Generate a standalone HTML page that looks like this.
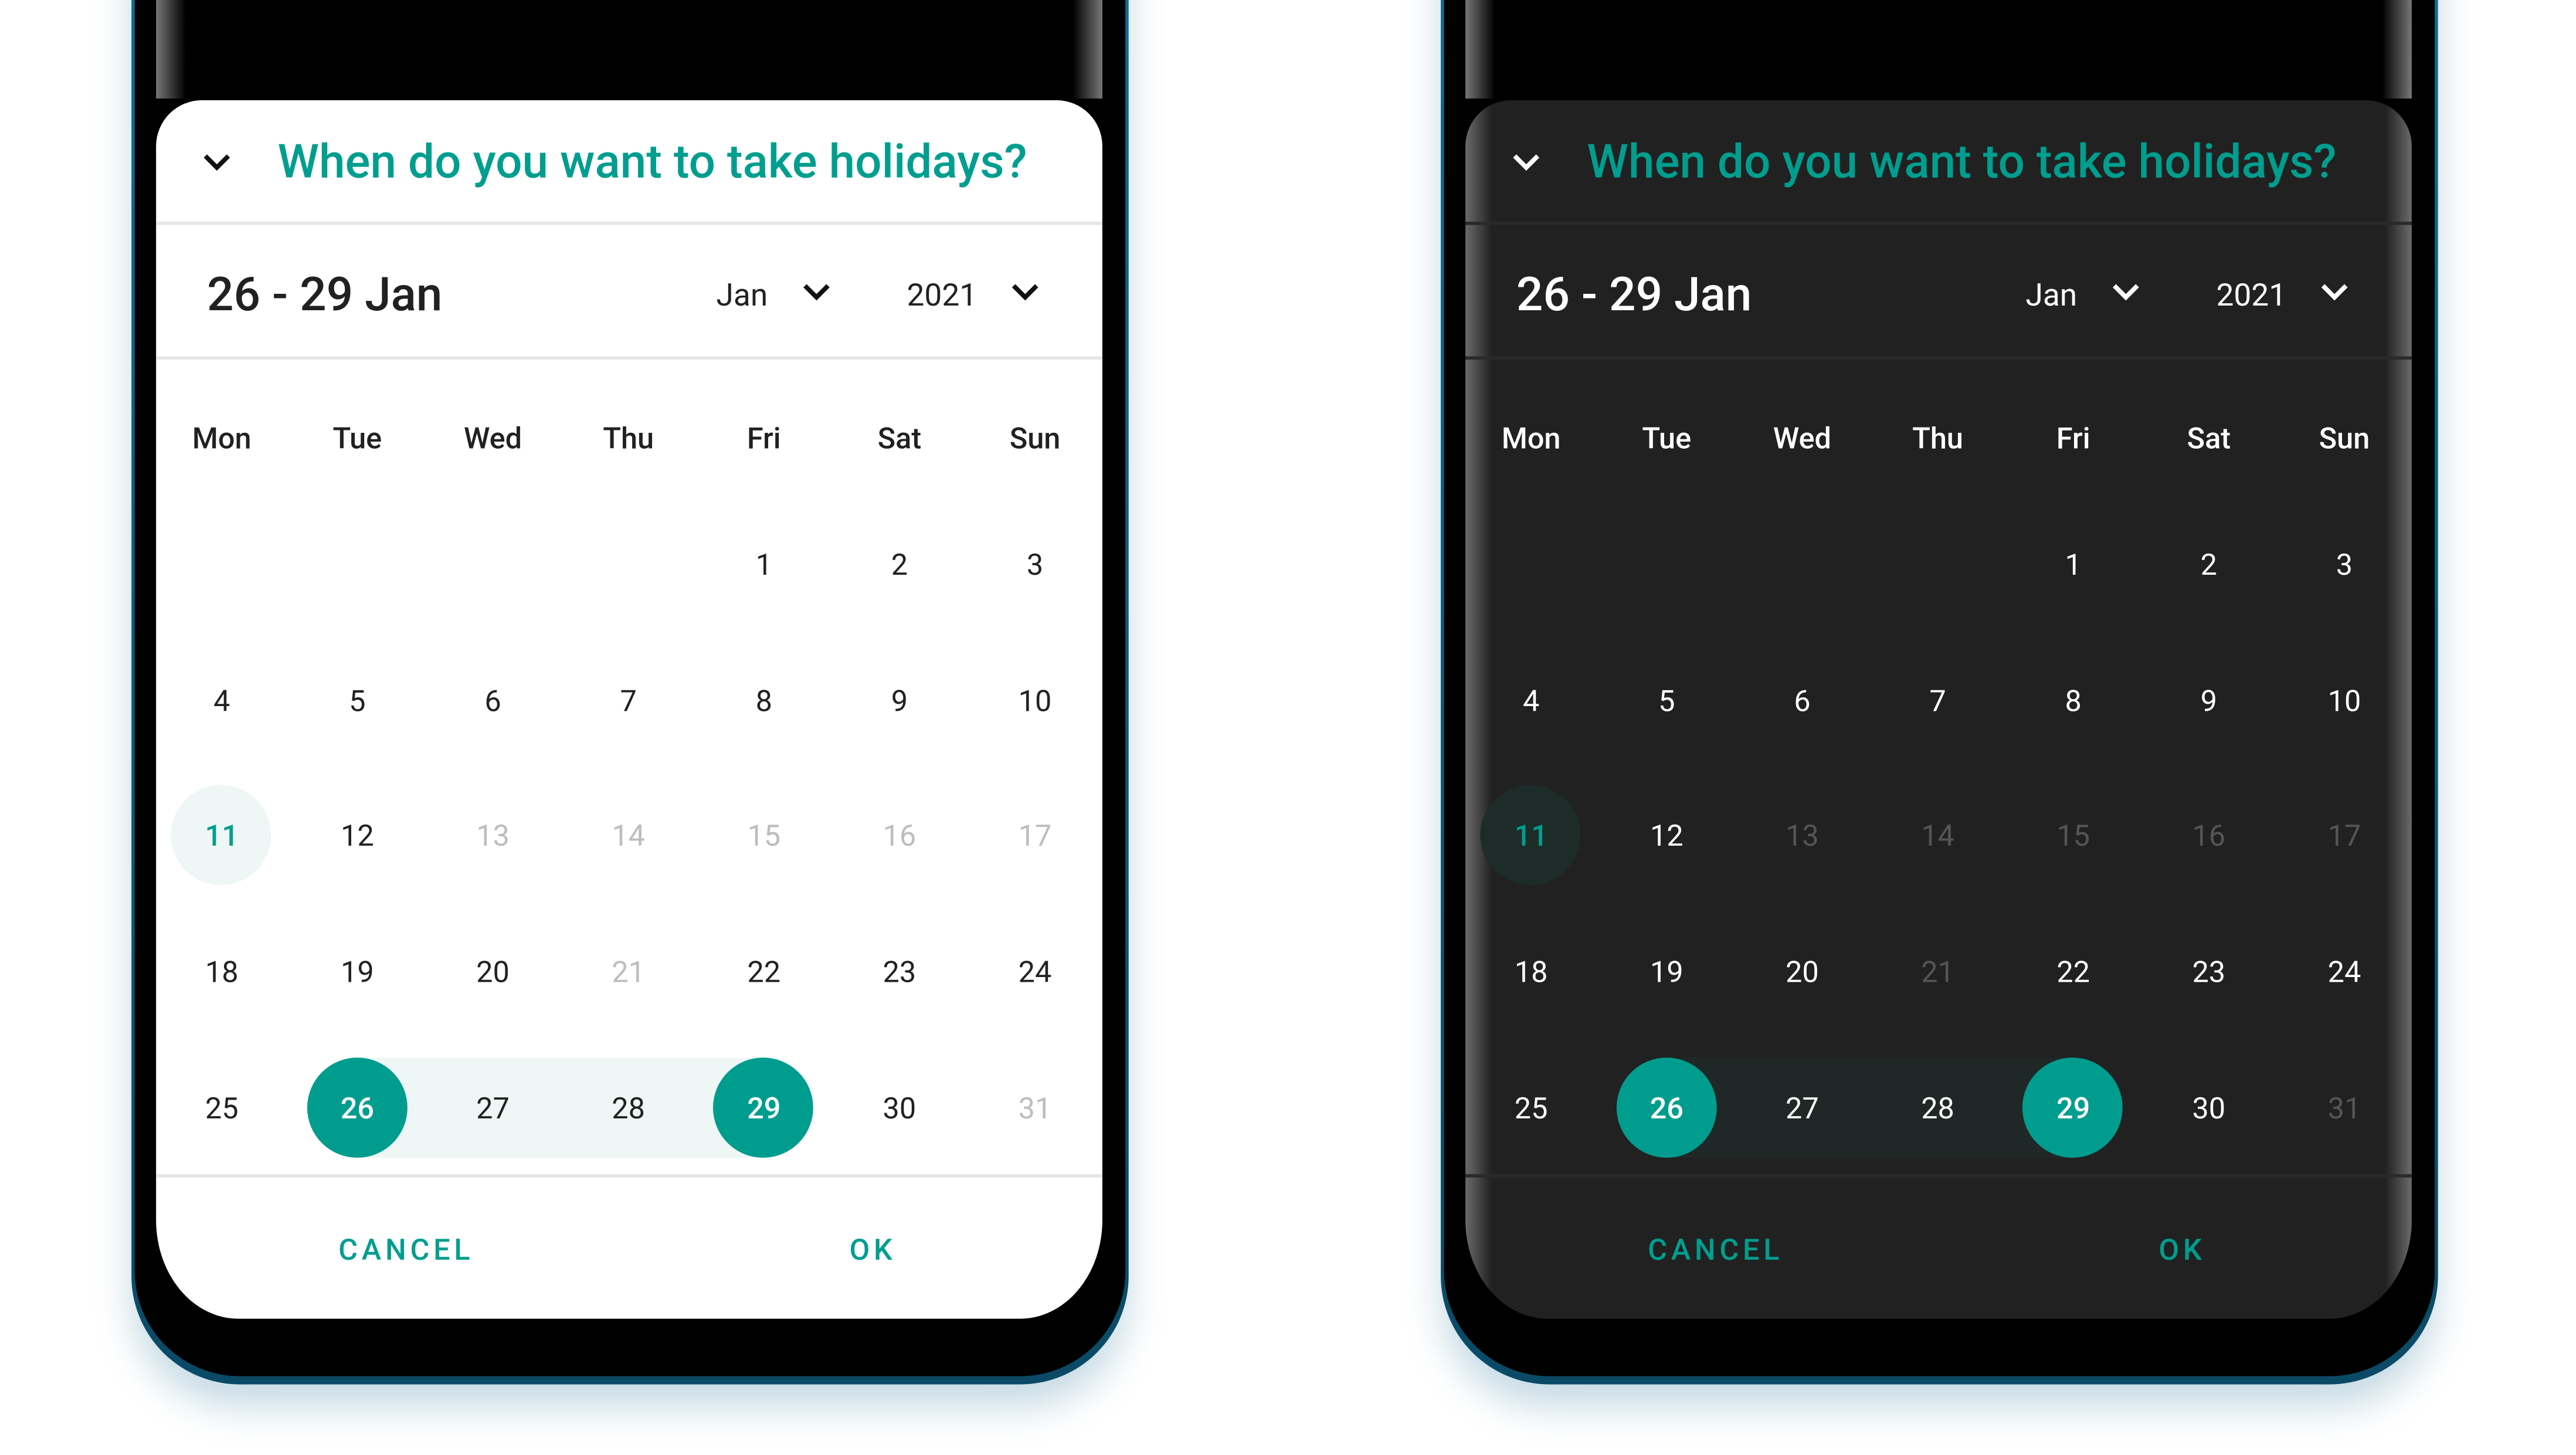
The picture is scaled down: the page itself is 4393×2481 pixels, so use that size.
<!DOCTYPE html>
<html><head><meta charset="utf-8"><style>
html,body{margin:0;padding:0;background:#fff;overflow:hidden}
#wrap{width:1568px;height:886px;position:relative;transform:scale(2.80166,2.80023);transform-origin:0 0;font-family:"Roboto","Liberation Sans",sans-serif}
.phone{position:absolute;top:-80px;width:607px;height:923px;border-radius:0 0 66px 66px;background:linear-gradient(#0e6f93,#0a4a66);box-shadow:0 14px 22px rgba(30,110,150,.25)}
.phone .body{position:absolute;left:2px;right:2px;top:0;bottom:5px;background:#000;border-radius:0 0 64px 64px}
.btn{position:absolute;top:0;width:4px;height:75px;background:#0c86b0;border-radius:0 2px 2px 0}
.screen{position:absolute;left:15px;top:80px;width:576px;height:743px}
.edge{position:absolute;top:0;width:18px;height:60px}
.dlg{position:absolute;left:0;top:61px;width:576px;height:742px;border-radius:28px 28px 50px 50px/28px 28px 60px 60px;overflow:hidden}
.light .dlg{background:#fff;color:#212121}
.dark .dlg{background:#212121;color:#fff}
.dark .dlg:before,.dark .dlg:after{content:"";position:absolute;top:0;bottom:0;width:16px;z-index:0}
.dark .dlg:before{left:0;background:linear-gradient(90deg,#6a6a6a,#212121)}
.dark .dlg:after{right:0;background:linear-gradient(270deg,#6a6a6a,#212121)}
.ab{position:absolute;z-index:1}
.title{left:74px;top:20px;font-size:28.6px;font-weight:500;color:#009e8f;white-space:nowrap}
.hr{position:absolute;left:0;width:576px;height:2px;z-index:1}
.light .hr{background:#e6e6e6}.dark .hr{background:#2a2a2a}
.range{left:31px;top:101px;font-size:28.6px;font-weight:500;white-space:nowrap}
.sel{font-size:19px;white-space:nowrap}
.c{position:absolute;width:80px;margin-left:-40px;text-align:center;font-size:18px;z-index:2}
.wd{font-weight:500}
.g{color:#bdbdbd}.dark .g{color:#555}
.circ{position:absolute;width:61px;height:61px;border-radius:50%;z-index:1}
.band{position:absolute;height:61px;z-index:1}
.btxt{position:absolute;color:#009e8f;font-size:18px;font-weight:500;letter-spacing:2.4px;z-index:2}
</style></head><body><div id="wrap">

<!-- LEFT -->
<div class="phone light" style="left:80px">
 <div class="body"></div>
 <div class="screen">
  <div class="edge" style="left:0;background:linear-gradient(90deg,#777,#000)"></div>
  <div class="edge" style="right:0;background:linear-gradient(270deg,#777,#000)"></div>
  <div class="dlg">
   <svg class="ab" style="left:28px;top:32px" width="18" height="12" viewBox="0 0 18 12"><polyline points="2,2 9,9 16,2" fill="none" stroke="#111" stroke-width="2.8"/></svg>
   <div class="ab title">When do you want to take holidays?</div>
   <div class="hr" style="top:74px"></div>
   <div class="ab range">26 - 29 Jan</div>
   <div class="ab sel" style="left:341px;top:107px">Jan</div>
   <svg class="ab" style="left:393px;top:111px" width="18" height="12" viewBox="0 0 18 12"><polyline points="2,2 9,9 16,2" fill="none" stroke="#111" stroke-width="2.8"/></svg>
   <div class="ab sel" style="left:457px;top:107px">2021</div>
   <svg class="ab" style="left:520px;top:111px" width="18" height="12" viewBox="0 0 18 12"><polyline points="2,2 9,9 16,2" fill="none" stroke="#111" stroke-width="2.8"/></svg>
   <div class="hr" style="top:156px"></div>
   <div class="hr" style="top:654px"></div>
   <div class="circ" style="left:9px;top:417px;background:#eef7f5"></div>
   <div class="band" style="left:122px;top:583px;width:248px;background:#eef7f5"></div>
   <div class="circ" style="left:92px;top:583px;background:#009d8f"></div>
   <div class="circ" style="left:339px;top:583px;background:#009d8f"></div>
   <div class="btxt" style="left:111px;top:690px">CANCEL</div>
   <div class="btxt" style="left:422px;top:690px">OK</div>
   <div id="calL"></div>
  </div>
 </div>
 <div class="btn" style="left:606px"></div>
</div>

<!-- RIGHT -->
<div class="phone dark" style="left:877px">
 <div class="body"></div>
 <div class="screen">
  <div class="edge" style="left:0;background:linear-gradient(90deg,#777,#000)"></div>
  <div class="edge" style="right:0;background:linear-gradient(270deg,#777,#000)"></div>
  <div class="dlg">
   <svg class="ab" style="left:28px;top:32px" width="18" height="12" viewBox="0 0 18 12"><polyline points="2,2 9,9 16,2" fill="none" stroke="#fff" stroke-width="2.8"/></svg>
   <div class="ab title">When do you want to take holidays?</div>
   <div class="hr" style="top:74px"></div>
   <div class="ab range">26 - 29 Jan</div>
   <div class="ab sel" style="left:341px;top:107px">Jan</div>
   <svg class="ab" style="left:393px;top:111px" width="18" height="12" viewBox="0 0 18 12"><polyline points="2,2 9,9 16,2" fill="none" stroke="#fff" stroke-width="2.8"/></svg>
   <div class="ab sel" style="left:457px;top:107px">2021</div>
   <svg class="ab" style="left:520px;top:111px" width="18" height="12" viewBox="0 0 18 12"><polyline points="2,2 9,9 16,2" fill="none" stroke="#fff" stroke-width="2.8"/></svg>
   <div class="hr" style="top:156px"></div>
   <div class="hr" style="top:654px"></div>
   <div class="circ" style="left:9px;top:417px;background:#1d2c29"></div>
   <div class="band" style="left:122px;top:583px;width:248px;background:#1f2826"></div>
   <div class="circ" style="left:92px;top:583px;background:#009d8f"></div>
   <div class="circ" style="left:339px;top:583px;background:#009d8f"></div>
   <div class="btxt" style="left:111px;top:690px">CANCEL</div>
   <div class="btxt" style="left:422px;top:690px">OK</div>
   <div id="calR"></div>
  </div>
 </div>
 <div class="btn" style="left:606px"></div>
</div>

</div>
<script>
var xs=[40,122.5,205,287.5,370,452.5,535];
var rows=[273,356,438,521,604];
var wd=["Mon","Tue","Wed","Thu","Fri","Sat","Sun"];
var grey={13:1,14:1,15:1,16:1,17:1,21:1,31:1};
function build(id){
 var h="";
 for(var i=0;i<7;i++)h+='<div class="c wd" style="left:'+xs[i]+'px;top:196px">'+wd[i]+'</div>';
 for(var d=1;d<=31;d++){
  var idx=d+3;var r=Math.floor(idx/7),col=idx%7;
  var cls="c";var st="";
  if(grey[d])cls+=" g";
  if(d==11){st="color:#009e8f;font-weight:500;";}
  if(d==26||d==29){st="color:#fff;font-weight:500;";}
  h+='<div class="'+cls+'" style="left:'+xs[col]+'px;top:'+rows[r]+'px;'+st+'">'+d+'</div>';
 }
 document.getElementById(id).innerHTML=h;
}
build("calL");build("calR");
</script>
</body></html>
